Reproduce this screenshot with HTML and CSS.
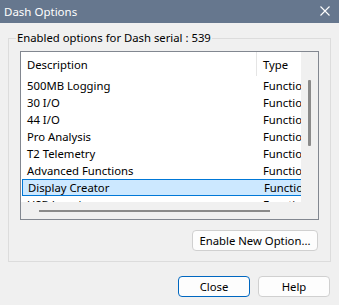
FILE: index.html
```html
<!DOCTYPE html>
<html lang="en">
<head>
  <meta charset="UTF-8">
  <title>Dash Options</title>
  <link rel="stylesheet" href="styles.css">
</head>
<body>
  <div class="window">
    <div class="titlebar">
      <span class="title">Dash Options</span>
      <svg class="close-x" width="10" height="10" viewBox="0 0 10 10">
        <path d="M0.5 0.5 L9.5 9.5 M9.5 0.5 L0.5 9.5" stroke="#ffffff" stroke-width="1.1" fill="none"/>
      </svg>
    </div>

    <fieldset class="group">
      <legend>Enabled options for Dash serial : 539</legend>

      <div class="listbox">
        <div class="list-main">
          <div class="list-view">
            <div class="list-head">
              <div class="col-desc">Description</div>
              <div class="col-type">Type</div>
            </div>
            <div class="row"><div class="col-desc">500MB Logging</div><div class="col-type">Function</div></div>
            <div class="row"><div class="col-desc">30 I/O</div><div class="col-type">Function</div></div>
            <div class="row"><div class="col-desc">44 I/O</div><div class="col-type">Function</div></div>
            <div class="row"><div class="col-desc">Pro Analysis</div><div class="col-type">Function</div></div>
            <div class="row"><div class="col-desc">T2 Telemetry</div><div class="col-type">Function</div></div>
            <div class="row"><div class="col-desc">Advanced Functions</div><div class="col-type">Function</div></div>
            <div class="row selected"><div class="col-desc">Display Creator</div><div class="col-type">Function</div></div>
            <div class="row"><div class="col-desc">USB Logging</div><div class="col-type">Function</div></div>
          </div>
          <div class="vscroll"><div class="vthumb"></div></div>
        </div>
        <div class="hscroll-row">
          <div class="hscroll"><div class="hthumb"></div></div>
          <div class="corner"></div>
        </div>
      </div>

      <div class="group-actions">
        <button class="btn btn-wide">Enable New Option...</button>
      </div>
    </fieldset>

    <div class="dialog-actions">
      <button class="btn btn-default">Close</button>
      <button class="btn">Help</button>
    </div>
  </div>
</body>
</html>
```

FILE: styles.css
```css
body {
  margin: 0;
  padding: 0;
  background: #f0f0f0;
  font-family: "Noto Sans", "Open Sans", sans-serif;
  font-size: 11.3px;
  color: #000000;
}

.window {
  width: 339px;
  height: 305px;
  overflow: hidden;
}

.titlebar {
  height: 23px;
  background: #66778e;
  color: #ffffff;
  display: flex;
  align-items: center;
  justify-content: space-between;
  padding: 0 9px 0 4px;
}

.title {
  font-size: 11.5px;
  line-height: 23px;
}

.close-x {
  display: block;
  margin-top: -1px;
}

.group {
  margin: 7px 8px 0 8px;
  padding: 0 11px 0 11px;
  border: 1px solid #dcdcdc;
  height: 232px;
  box-sizing: border-box;
}

.group legend {
  padding: 0 1px;
  margin-left: -4px;
  line-height: 16px;
}

.listbox {
  margin-top: 5px;
  width: 299px;
  height: 169px;
  box-sizing: border-box;
  border: 1px solid #828790;
  background: #ffffff;
  display: flex;
  flex-direction: column;
}

.list-main {
  display: flex;
  height: 150px;
}

.list-view {
  width: 281px;
  overflow: hidden;
}

.list-head {
  display: flex;
  height: 25px;
  align-items: stretch;
}

.list-head .col-desc,
.list-head .col-type {
  line-height: 25px;
}

.list-head .col-desc {
  border-right: 1px solid #e5e5e5;
  height: 24px;
}

.row {
  display: flex;
  height: 17px;
  line-height: 17px;
  box-sizing: border-box;
}

.row.selected {
  background: #cce8ff;
  border: 1px solid #0078d7;
  border-right: none;
  margin-left: 1px;
  line-height: 15px;
}

.row.selected .col-desc {
  width: 235px;
  padding-left: 5px;
}

.col-desc {
  width: 236px;
  padding-left: 6px;
  box-sizing: border-box;
  white-space: nowrap;
  flex-shrink: 0;
}

.col-type {
  padding-left: 6px;
  white-space: nowrap;
}

.vscroll {
  width: 17px;
  background: #f0f0f0;
  position: relative;
}

.vthumb {
  position: absolute;
  left: 7px;
  top: 28px;
  width: 3px;
  height: 66px;
  background: #8a8a8a;
  border-radius: 1px;
}

.hscroll-row {
  display: flex;
  height: 17px;
}

.hscroll {
  width: 281px;
  background: #f0f0f0;
  position: relative;
}

.hthumb {
  position: absolute;
  left: 18px;
  top: 8px;
  width: 231px;
  height: 2px;
  background: #8a8a8a;
}

.corner {
  width: 17px;
  background: #f0f0f0;
}

.group-actions {
  display: flex;
  justify-content: flex-end;
  margin-top: 10px;
  padding-right: 1px;
}

.btn {
  font-family: "Noto Sans", "Open Sans", sans-serif;
  font-size: 11.3px;
  color: #000000;
  background: #fdfdfd;
  border: 1px solid #d0d0d0;
  border-radius: 4px;
  height: 21px;
  padding: 0;
  width: 72px;
  box-sizing: border-box;
}

.btn-wide {
  width: 126px;
}

.btn-default {
  border-color: #0067c0;
}

.dialog-actions {
  display: flex;
  justify-content: flex-end;
  gap: 8px;
  margin-top: 14px;
  padding-right: 9px;
}
```
